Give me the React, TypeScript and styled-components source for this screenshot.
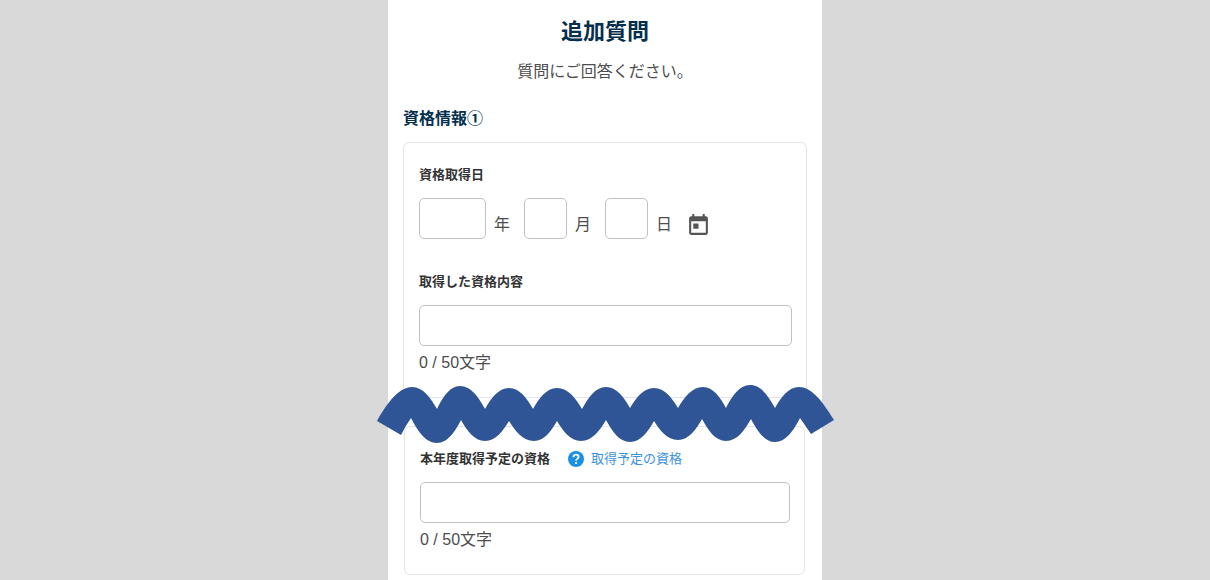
import React from "react";
import styled, { createGlobalStyle } from "styled-components";
import { MdToday } from "react-icons/md";

const GlobalStyle = createGlobalStyle`
  *, *::before, *::after { box-sizing: border-box; }
  body {
    margin: 0;
    background: #d9d9d9;
    color: #4d4d4d;
    font-family: "Liberation Sans", "Noto Sans CJK JP", sans-serif;
    font-size: 16px;
    line-height: 24px;
  }
`;

const Page = styled.main`
  max-width: 434px;
  min-height: 100vh;
  margin: 0 auto;
  padding: 15px 15px 5px;
  background: #fff;
`;

const Title = styled.h1`
  margin: 0;
  color: #032f4c;
  font-size: 22px;
  line-height: 34px;
  text-align: center;
`;

const Lead = styled.p`
  margin: 11px 0 23px;
  text-align: center;
`;

const SectionTitle = styled.h2`
  margin: 0 0 11px;
  color: #032f4c;
  font-size: 16px;
  line-height: 24px;
`;

const Card = styled.section<{ $inset?: boolean }>`
  margin: ${(p) => (p.$inset ? "0 2px 0 1px" : "0")};
  padding: 22px 14px 22px 15px;
  border: 1px solid #e4e4e4;
  border-radius: 6px;
`;

const Fieldset = styled.fieldset`
  min-width: 0;
  margin: 0 0 33px;
  padding: 0;
  border: 0;
`;

const labelText = `
  color: #333;
  font-size: 13px;
  font-weight: 700;
  line-height: 20px;
`;

const Legend = styled.legend`
  ${labelText}
  padding: 0;
  margin-bottom: 13px;
`;

const Label = styled.label`
  ${labelText}
`;

const LabelRow = styled.div`
  display: flex;
  align-items: center;
  gap: 18px;
  margin-bottom: 13px;
`;

const Input = styled.input<{ $width?: number }>`
  display: block;
  width: ${(p) => (p.$width ? `${p.$width}px` : "100%")};
  height: 41px;
  padding: 0 10px;
  border: 1px solid #c2c2c2;
  border-radius: 5px;
  background: #fff;
  color: #333;
  font: inherit;
`;

const DateRow = styled.div`
  display: flex;
  align-items: flex-end;
  gap: 14px;
`;

const DatePart = styled.label`
  display: flex;
  align-items: flex-end;
  gap: 8px;
`;

const Unit = styled.span`
  padding-bottom: 2px;
`;

const CalendarButton = styled.button`
  display: flex;
  padding: 0 0 1px;
  border: 0;
  background: none;
  color: #555;
  cursor: pointer;
`;

const Counter = styled.p`
  margin: 5px 0 0;
`;

const HelpLink = styled.a`
  display: flex;
  align-items: center;
  gap: 7px;
  color: #3c93dd;
  font-size: 13px;
  line-height: 20px;
  text-decoration: none;
`;

const HelpMark = styled.svg`
  display: block;
  width: 16px;
  height: 16px;
`;

const Break = styled.div`
  position: relative;
  height: 28px;
`;

const Wave = styled.svg`
  position: absolute;
  top: -18px;
  left: 50%;
  width: 460px;
  height: 64px;
  transform: translateX(-50%);
  pointer-events: none;
`;

type Point = [number, number];

const upperEdge: Point[] = [
  [37, 7], [62, 29], [85, 6], [110, 29], [134, 8], [158, 29], [182, 8], [207, 29], [231, 7],
  [255, 28], [279, 8], [303, 28], [328, 7], [351, 28], [375, 5], [400, 28], [424, 7],
];

const lowerEdge: Point[] = [
  [425, 38], [400, 62], [376, 39], [351, 61], [327, 39], [303, 60], [279, 41], [255, 62],
  [231, 40], [206, 61], [182, 41], [159, 61], [134, 41], [110, 61], [86, 40], [62, 63], [36, 38],
];

// Joins points with arcs that are level at the rounded turns and steep at the sharp ones.
function edge(points: Point[], firstIsRound: boolean) {
  return points
    .slice(1)
    .map(([x, y], i) => {
      const [px, py] = points[i];
      const dx = x - px;
      const dy = y - py;
      const fromRound = firstIsRound === (i % 2 === 0);
      return fromRound
        ? `C${px + dx * 0.45} ${py} ${x - dx * 0.25} ${y - dy * 0.5} ${x} ${y}`
        : `C${px + dx * 0.25} ${py + dy * 0.5} ${x - dx * 0.45} ${y} ${x} ${y}`;
    })
    .join("");
}

const wavePath =
  "M2 41C13 21 25 7 37 7" +
  edge(upperEdge, true) +
  "C436 7 446 19 459 40L436 54" +
  "L425 38" +
  edge(lowerEdge, false) +
  "Q31 45 26 55Z";

export default function App() {
  return (
    <>
      <GlobalStyle />
      <Page>
        <Title>追加質問</Title>
        <Lead>質問にご回答ください。</Lead>
        <SectionTitle>資格情報①</SectionTitle>

        <Card>
          <Fieldset>
            <Legend>資格取得日</Legend>
            <DateRow>
              <DatePart>
                <Input $width={67} inputMode="numeric" maxLength={4} />
                <Unit>年</Unit>
              </DatePart>
              <DatePart>
                <Input $width={43} inputMode="numeric" maxLength={2} />
                <Unit>月</Unit>
              </DatePart>
              <DatePart>
                <Input $width={43} inputMode="numeric" maxLength={2} />
                <Unit>日</Unit>
              </DatePart>
              <CalendarButton type="button" aria-label="カレンダー">
                <MdToday size={25} />
              </CalendarButton>
            </DateRow>
          </Fieldset>
          <LabelRow>
            <Label htmlFor="acquired">取得した資格内容</Label>
          </LabelRow>
          <Input id="acquired" maxLength={50} />
          <Counter>0 / 50文字</Counter>
        </Card>

        <Break>
          <Wave viewBox="0 0 460 64" aria-hidden="true">
            <path d={wavePath} fill="#2f5597" />
          </Wave>
        </Break>

        <Card $inset>
          <LabelRow>
            <Label htmlFor="planned">本年度取得予定の資格</Label>
            <HelpLink href="#planned">
              <HelpMark viewBox="0 0 16 16" aria-hidden="true">
                <circle cx="8" cy="8" r="8" fill="#1a8fe3" />
                <path
                  d="M5.4 6.2C5.4 4.5 6.5 3.6 8 3.6S10.6 4.6 10.6 6C10.6 7.6 8 7.7 8 9.8"
                  fill="none"
                  stroke="#fff"
                  strokeWidth="1.8"
                />
                <circle cx="8" cy="12" r="1.1" fill="#fff" />
              </HelpMark>
              取得予定の資格
            </HelpLink>
          </LabelRow>
          <Input id="planned" maxLength={50} />
          <Counter>0 / 50文字</Counter>
        </Card>
      </Page>
    </>
  );
}
